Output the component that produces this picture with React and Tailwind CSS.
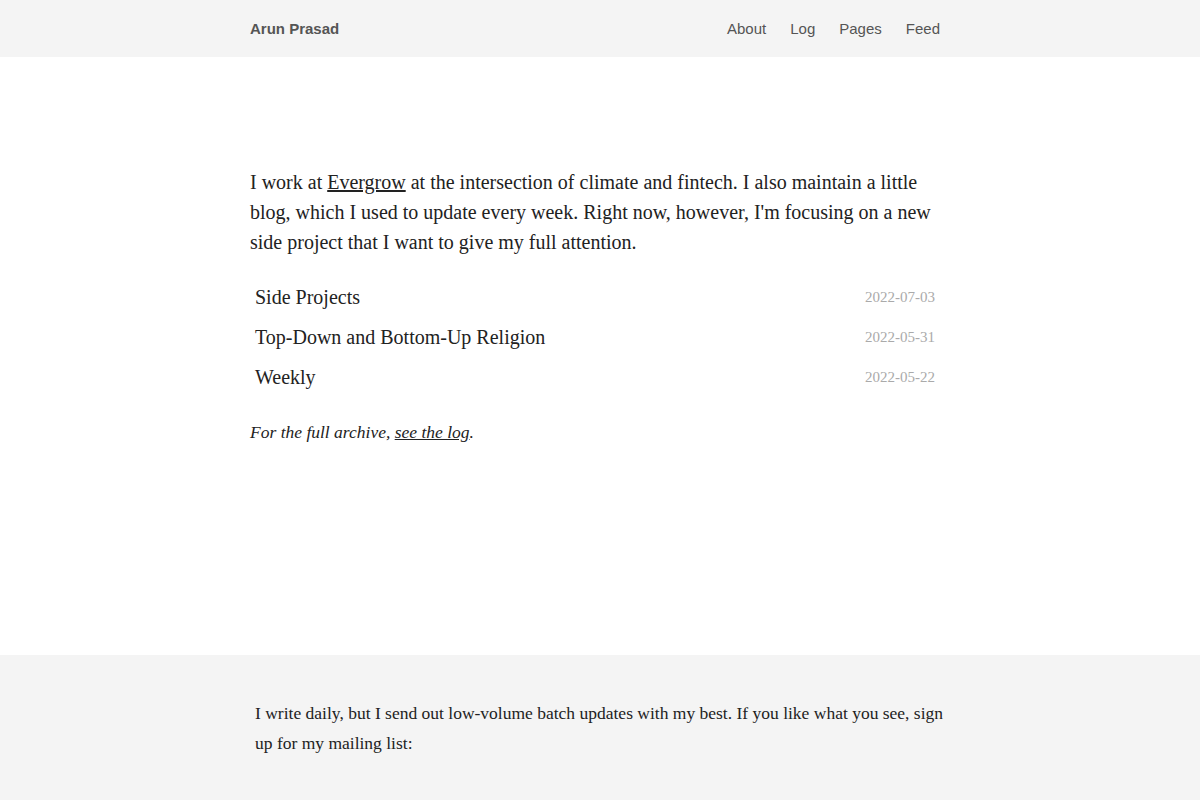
import React from 'react';

const posts = [
  { title: 'Side Projects', date: '2022-07-03' },
  { title: 'Top-Down and Bottom-Up Religion', date: '2022-05-31' },
  { title: 'Weekly', date: '2022-05-22' },
];

const navLinks = ['About', 'Log', 'Pages', 'Feed'];

const App = () => {
  return (
    <div className="min-h-screen bg-white text-[#222]">
      {/* Top bar */}
      <header className="h-[57px] bg-[#f4f4f4] font-['Liberation_Sans',Arial,sans-serif] text-[15px]">
        <div className="mx-auto flex h-full w-[700px] items-center justify-between pt-[2px] pr-[10px]">
          <a href="#" className="font-bold text-[#555]">Arun Prasad</a>
          <nav className="flex gap-6 text-[#555]">
            {navLinks.map((link) => (
              <a key={link} href="#">{link}</a>
            ))}
          </nav>
        </div>
      </header>

      {/* Intro + recent posts */}
      <main className="mx-auto h-[598px] w-[700px] pt-[110px] font-['Liberation_Serif','Times_New_Roman',serif]">
        <p className="text-[20px] leading-[30px]">
          I work at <a href="#" className="underline">Evergrow</a> at the intersection of climate and fintech. I also maintain a little blog, which I used to update every week. Right now, however, I'm focusing on a new side project that I want to give my full attention.
        </p>

        <ul className="mt-5">
          {posts.map((post) => (
            <li key={post.title} className="flex h-10 items-center justify-between pl-[5px] pr-[15px]">
              <a href="#" className="text-[20px]">{post.title}</a>
              <span className="text-[15px] text-[#aaa]">{post.date}</span>
            </li>
          ))}
        </ul>

        <p className="mt-5 text-[17.5px] italic leading-[30px]">
          For the full archive, <a href="#" className="underline">see the log</a>.
        </p>
      </main>

      {/* Mailing list */}
      <footer className="bg-[#f4f4f4] pt-[43px] pb-12 font-['Liberation_Serif','Times_New_Roman',serif]">
        <div className="mx-auto w-[700px] pl-[5px] pr-[5px]">
          <p className="text-[17.5px] leading-[30px]">
            I write daily, but I send out low-volume batch updates with my best. If you like what you see, sign up for my mailing list:
          </p>
        </div>
      </footer>
    </div>
  );
};

export default App;
